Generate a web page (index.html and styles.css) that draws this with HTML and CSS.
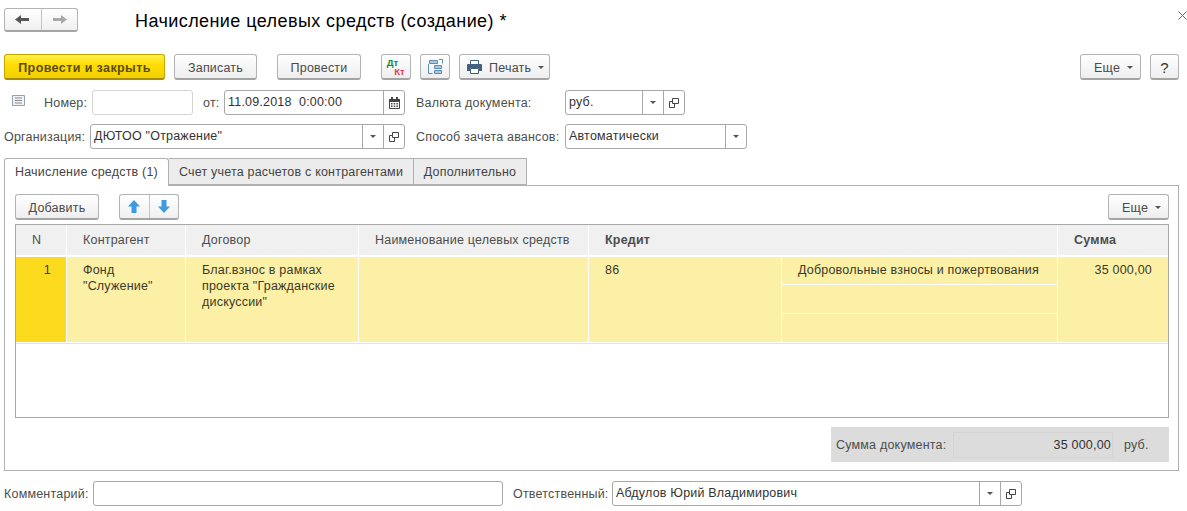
FILE: index.html
```html
<!DOCTYPE html>
<html lang="ru">

<head>
    <meta charset="UTF-8">
    <title>Начисление целевых средств (создание) *</title>
    <link rel="stylesheet" href="styles.css">
</head>

<body>
    <svg class="defs" width="0" height="0">
        <symbol id="drop" viewBox="0 0 6 3"><path d="M0 0h6L3 3z" fill="#555" /></symbol>
        <symbol id="open" viewBox="0 0 10 10">
            <path d="M3.500 .5h6v5h-6z M.5 3.500h3 M.5 3.500v6h5v-4" fill="none" stroke="#444" />
        </symbol>
        <symbol id="cal" viewBox="0 0 11 12">
            <path d="M.5 2.500h10v9H.5z" fill="#fff" stroke="#444" />
            <path d="M0 2h11v3H0z M2 0h2v2H2z M7 0h2v2H7z M2 6h1.500v1.500H2z M4.700 6h1.500v1.500H4.700z M7.400 6h1.500v1.500H7.400z M2 8.500h1.500V10H2z M4.700 8.500h1.500V10H4.700z M7.400 8.500h1.500V10H7.400z" fill="#444" />
        </symbol>
    </svg>

    <!-- Шапка -->
    <header class="head">
        <div class="nav-group">
            <button class="btn-part nav-back">
                <svg width="15" height="11" viewBox="0 0 15 11"><path d="M0 5.500 6 1v3h8v3H6v3z" fill="#555" /></svg>
            </button>
            <button class="btn-part nav-next">
                <svg width="15" height="11" viewBox="0 0 15 11"><path d="M15 5.500 9 1v3H1v3h8v3z" fill="#a8a8a8" /></svg>
            </button>
        </div>
        <h1 class="title">Начисление целевых средств (создание) *</h1>
        <svg class="close" width="9" height="9" viewBox="0 0 9 9"><path d="M.5 .5l8 8M8.500 .5l-8 8" stroke="#666" fill="none" /></svg>
    </header>

    <!-- Командная панель -->
    <div class="toolbar">
        <button class="btn btn-main">Провести и закрыть</button>
        <button class="btn btn-write">Записать</button>
        <button class="btn btn-post">Провести</button>
        <button class="btn btn-icon btn-dtkt"><span class="dt">Дт</span><span class="kt">Кт</span></button>
        <button class="btn btn-icon btn-struct">
            <svg width="15" height="15" viewBox="0 0 15 15">
                <path d="M.5 5v9.500h4 M11 .5h3.500v4" fill="none" stroke="#5b8db5" />
                <path d="M1.500 1.500h8v3h-8z M6.500 6.500h7v3h-7z M6.500 11.500h7v3h-7z" fill="#a8c8e0" stroke="#5b8db5" />
            </svg>
        </button>
        <button class="btn btn-print">
            <svg width="15" height="14" viewBox="0 0 15 14">
                <path d="M3.500 .5h8v4h-8z" fill="#fff" stroke="#44607f" />
                <path d="M1 4h13a1 1 0 0 1 1 1v6h-3V8H3v3H0V5a1 1 0 0 1 1-1z" fill="#44607f" />
                <path d="M3.500 8.500h8v5h-8z" fill="#fff" stroke="#44607f" />
            </svg>
            <span>Печать</span>
            <svg class="drop" width="6" height="3"><use href="#drop" /></svg>
        </button>
        <div class="toolbar-right">
            <button class="btn btn-more"><span>Еще</span><svg class="drop" width="6" height="3"><use href="#drop" /></svg></button>
            <button class="btn btn-help">?</button>
        </div>
    </div>

    <!-- Реквизиты -->
    <div class="form-row row-number">
        <svg class="doc-icon" width="13" height="11" viewBox="0 0 13 11">
            <path d="M.5 .5h12v10H.5z" fill="#f2f2f2" stroke="#8ba3bb" />
            <path d="M3 3h7M3 5.500h7M3 8h7" stroke="#8a8a8a" />
        </svg>
        <label class="lbl lbl-number">Номер:</label>
        <div class="field field-number"></div>
        <label class="lbl lbl-from">от:</label>
        <div class="field field-date">
            <span class="value">11.09.2018&nbsp; 0:00:00</span>
            <span class="cell"><svg width="11" height="12"><use href="#cal" /></svg></span>
        </div>
        <label class="lbl lbl-right">Валюта документа:</label>
        <div class="field field-currency">
            <span class="value">руб.</span>
            <span class="cell"><svg width="6" height="3"><use href="#drop" /></svg></span>
            <span class="cell"><svg width="10" height="10"><use href="#open" /></svg></span>
        </div>
    </div>

    <div class="form-row row-org">
        <label class="lbl lbl-org">Организация:</label>
        <div class="field field-org">
            <span class="value">ДЮТОО "Отражение"</span>
            <span class="cell"><svg width="6" height="3"><use href="#drop" /></svg></span>
            <span class="cell"><svg width="10" height="10"><use href="#open" /></svg></span>
        </div>
        <label class="lbl lbl-right">Способ зачета авансов:</label>
        <div class="field field-advance">
            <span class="value">Автоматически</span>
            <span class="cell"><svg width="6" height="3"><use href="#drop" /></svg></span>
        </div>
    </div>

    <!-- Закладки -->
    <div class="tabs">
        <div class="tab active">Начисление средств (1)</div>
        <div class="tab tab-account">Счет учета расчетов с контрагентами</div>
        <div class="tab tab-extra">Дополнительно</div>
    </div>

    <section class="panel">
        <div class="panel-bar">
            <button class="btn btn-add">Добавить</button>
            <div class="arrows">
                <button class="btn-part">
                    <svg width="12" height="13" viewBox="0 0 12 13"><path d="M6 0 12 6.500H8.500V13h-5V6.500H0z" fill="#3d9be0" /></svg>
                </button>
                <button class="btn-part">
                    <svg width="12" height="13" viewBox="0 0 12 13"><path d="M6 13 12 6.500H8.500V0h-5v6.500H0z" fill="#3d9be0" /></svg>
                </button>
            </div>
            <button class="btn btn-more btn-more-table"><span>Еще</span><svg class="drop" width="6" height="3"><use href="#drop" /></svg></button>
        </div>

        <div class="table-box">
            <div class="grid">
                <div class="th th-n">N</div>
                <div class="th">Контрагент</div>
                <div class="th">Договор</div>
                <div class="th th-name">Наименование целевых средств</div>
                <div class="th th-credit">Кредит</div>
                <div class="th th-sum">Сумма</div>

                <div class="td td-n">1</div>
                <div class="td td-tall">Фонд<br>"Служение"</div>
                <div class="td td-tall">Благ.взнос в рамках<br>проекта "Гражданские<br>дискуссии"</div>
                <div class="td td-tall"></div>
                <div class="td td-tall td-account">86</div>
                <div class="td td-sub">Добровольные взносы и пожертвования</div>
                <div class="td td-tall td-money">35 000,00</div>
                <div class="td td-sub td-sub2"></div>
                <div class="td td-sub td-sub3"></div>
            </div>
        </div>

        <div class="total">
            <span class="total-label">Сумма документа:</span>
            <span class="total-value">35 000,00</span>
            <span class="total-cur">руб.</span>
        </div>
    </section>

    <!-- Подвал -->
    <div class="form-row row-bottom">
        <label class="lbl lbl-comment">Комментарий:</label>
        <div class="field field-comment"></div>
        <label class="lbl lbl-resp">Ответственный:</label>
        <div class="field field-resp">
            <span class="value">Абдулов Юрий Владимирович</span>
            <span class="cell"><svg width="6" height="3"><use href="#drop" /></svg></span>
            <span class="cell"><svg width="10" height="10"><use href="#open" /></svg></span>
        </div>
    </div>
</body>

</html>
```

FILE: styles.css
```css
body {
    margin: 0;
    width: 1187px;
    height: 511px;
    overflow: hidden;
    background: #fff;
    font-family: 'Liberation Sans', Arial, sans-serif;
    font-size: 12.5px;
    letter-spacing: 0.2px;
    color: #333;
}

.defs {
    display: block;
    height: 0;
}

button {
    font: inherit;
    letter-spacing: inherit;
    margin: 0;
    padding: 0;
}

/* Шапка */
.head {
    display: flex;
    align-items: center;
    height: 24px;
    padding: 8px 0 0 4px;
}

.nav-group,
.arrows {
    display: flex;
    box-sizing: border-box;
    border: 1px solid #b4b4b4;
    border-bottom: 2px solid #a4a4a4;
    border-radius: 3px;
    background: linear-gradient(#fff, #f0f0f0);
}

.nav-group {
    width: 74px;
    height: 24px;
}

.btn-part {
    flex: 1;
    display: flex;
    align-items: center;
    justify-content: center;
    border: 0;
    background: none;
}

.btn-part + .btn-part {
    border-left: 1px solid #c4c4c4;
}

.title {
    margin: 3px 0 0 57px;
    font-size: 18px;
    font-weight: normal;
    letter-spacing: 0.42px;
    color: #000;
}

.close {
    margin-left: auto;
    transform: translateY(-5px);
}

/* Кнопки */
.toolbar {
    display: flex;
    align-items: stretch;
    height: 26px;
    margin: 22px 8px 0 4px;
}

.btn {
    box-sizing: border-box;
    height: 26px;
    padding-top: 2px;
    border: 1px solid #b4b4b4;
    border-bottom: 2px solid #a4a4a4;
    border-radius: 3px;
    background: linear-gradient(#fff, #eee);
    color: #4a4a4a;
    white-space: nowrap;
}

.btn-main {
    width: 161px;
    border-color: #c6a500;
    border-bottom-color: #a88c00;
    background: linear-gradient(#fff04a, #ffdc00 45%, #f2d000);
    font-weight: bold;
    letter-spacing: 0.4px;
    color: #5a4c10;
}

.btn-write {
    width: 83px;
    margin-left: 9px;
}

.btn-post {
    width: 84px;
    margin-left: 20px;
}

.btn-icon {
    width: 30px;
    display: flex;
    align-items: center;
    justify-content: center;
    padding-top: 0;
}

.btn-dtkt {
    margin-left: 20px;
    flex-direction: column;
    font-weight: bold;
    font-size: 9.5px;
    letter-spacing: 0;
    line-height: 9px;
}

.dt {
    color: #0a8c3c;
    margin-right: 7px;
}

.kt {
    color: #e63c46;
    margin-left: 7px;
}

.btn-struct {
    margin-left: 9px;
}

.btn-print {
    display: flex;
    align-items: center;
    width: 91px;
    margin-left: 9px;
    padding: 0 0 0 7px;
}

.btn-print span {
    margin: 2px 0 0 7px;
}

.btn-print .drop {
    margin: 2px 0 0 7px;
}

.toolbar-right {
    display: flex;
    margin-left: auto;
}

.btn-more {
    display: flex;
    align-items: center;
    width: 61px;
    padding: 2px 0 0 13px;
}

.btn-more .drop {
    margin-left: 7px;
}

.btn-help {
    width: 29px;
    margin-left: 9px;
    font-size: 15px;
    color: #333;
}

/* Поля формы */
.form-row {
    display: flex;
    align-items: center;
    height: 25px;
}

.row-number {
    margin-top: 10px;
}

.row-org {
    margin-top: 9px;
}

.row-bottom {
    margin-top: 10px;
}

.lbl {
    flex: none;
    color: #4d4d4d;
    white-space: nowrap;
}

.field {
    flex: none;
    box-sizing: border-box;
    display: flex;
    align-items: stretch;
    height: 25px;
    border: 1px solid #a8a8a8;
    border-radius: 3px;
    background: #fff;
}

.value {
    flex: 1;
    padding-left: 3px;
    line-height: 23px;
    white-space: nowrap;
    overflow: hidden;
}

.cell {
    display: flex;
    align-items: center;
    justify-content: center;
    width: 20px;
    border-left: 1px solid #a8a8a8;
}

.doc-icon {
    margin: -4px 0 0 12px;
}

.lbl-number {
    width: 48px;
    margin-left: 19px;
}

.field-number {
    width: 101px;
    border-color: #d4d4d4;
}

.lbl-from {
    width: 21px;
    margin-left: 10px;
}

.field-date {
    width: 181px;
}

.lbl-right {
    width: 149px;
    margin-left: 11px;
}

.field-currency {
    width: 120px;
}

.lbl-org {
    width: 86px;
    margin-left: 4px;
}

.field-org {
    width: 315px;
}

.field-advance {
    width: 182px;
}

/* Закладки */
.tabs {
    display: flex;
    height: 27px;
    margin: 9px 0 0 4px;
    position: relative;
    z-index: 1;
}

.tab {
    box-sizing: border-box;
    height: 27px;
    padding-top: 6px;
    border: 1px solid #b0b0b0;
    border-left: 0;
    background: #ececec;
    text-align: center;
    color: #444;
    white-space: nowrap;
}

.tab.active {
    width: 165px;
    height: 28px;
    border-left: 1px solid #b0b0b0;
    border-bottom: 0;
    border-radius: 3px 3px 0 0;
    background: #fff;
}

.tab-account {
    width: 245px;
}

.tab-extra {
    width: 113px;
}

.panel {
    box-sizing: border-box;
    width: 1175px;
    height: 286px;
    margin-left: 4px;
    padding: 8px 9px 0 10px;
    border: 1px solid #b0b0b0;
}

.panel-bar {
    display: flex;
    height: 26px;
}

.btn-add {
    width: 84px;
}

.arrows {
    width: 60px;
    height: 26px;
    margin-left: 20px;
}

.btn-more-table {
    margin-left: auto;
}

/* Таблица */
.table-box {
    box-sizing: border-box;
    height: 194px;
    margin-top: 4px;
    border: 1px solid #a8a8a8;
}

.grid {
    display: grid;
    grid-template-columns: 50px 118px 172px 229px 192px 275px 110px;
    grid-template-rows: 31px 27px 28px 28px;
    gap: 1px;
    padding-bottom: 1px;
    border-bottom: 1px solid #e4e4e4;
    background: #fff;
}

.th {
    box-sizing: border-box;
    margin-bottom: 1px;
    padding: 8px 0 0 16px;
    background: #f0f0f0;
    color: #4d4d4d;
    white-space: nowrap;
}

.th-credit {
    grid-column: span 2;
    font-weight: bold;
}

.th-sum {
    font-weight: bold;
}

.td {
    box-sizing: border-box;
    padding: 5px 0 0 16px;
    background: #fcefa6;
    color: #3a3a2a;
    line-height: 16px;
    white-space: nowrap;
}

.td-n {
    grid-row: span 3;
    padding: 5px 15px 0 0;
    background: #fcdb1e;
    text-align: right;
}

.td-tall {
    grid-row: span 3;
}

.td-sub {
    grid-column: 6;
}

.td-sub2 {
    grid-row: 3;
}

.td-sub3 {
    grid-row: 4;
}

.td-money {
    padding: 5px 16px 0 0;
    text-align: right;
}

/* Итог */
.total {
    display: flex;
    align-items: center;
    box-sizing: border-box;
    width: 338px;
    height: 35px;
    margin: 9px 0 0 auto;
    background: #dcdcdc;
    color: #4d4d4d;
}

.total-label {
    box-sizing: border-box;
    width: 122px;
    padding-left: 5px;
    white-space: nowrap;
}

.total-value {
    box-sizing: border-box;
    width: 160px;
    padding-right: 1px;
    line-height: 24px;
    border: 1px solid #d4d4d4;
    text-align: right;
    color: #333;
}

.total-cur {
    margin-left: 11px;
}

/* Подвал */
.lbl-comment {
    width: 89px;
    margin-left: 4px;
}

.field-comment {
    width: 410px;
}

.lbl-resp {
    width: 99px;
    margin-left: 10px;
}

.field-resp {
    width: 410px;
}
```
